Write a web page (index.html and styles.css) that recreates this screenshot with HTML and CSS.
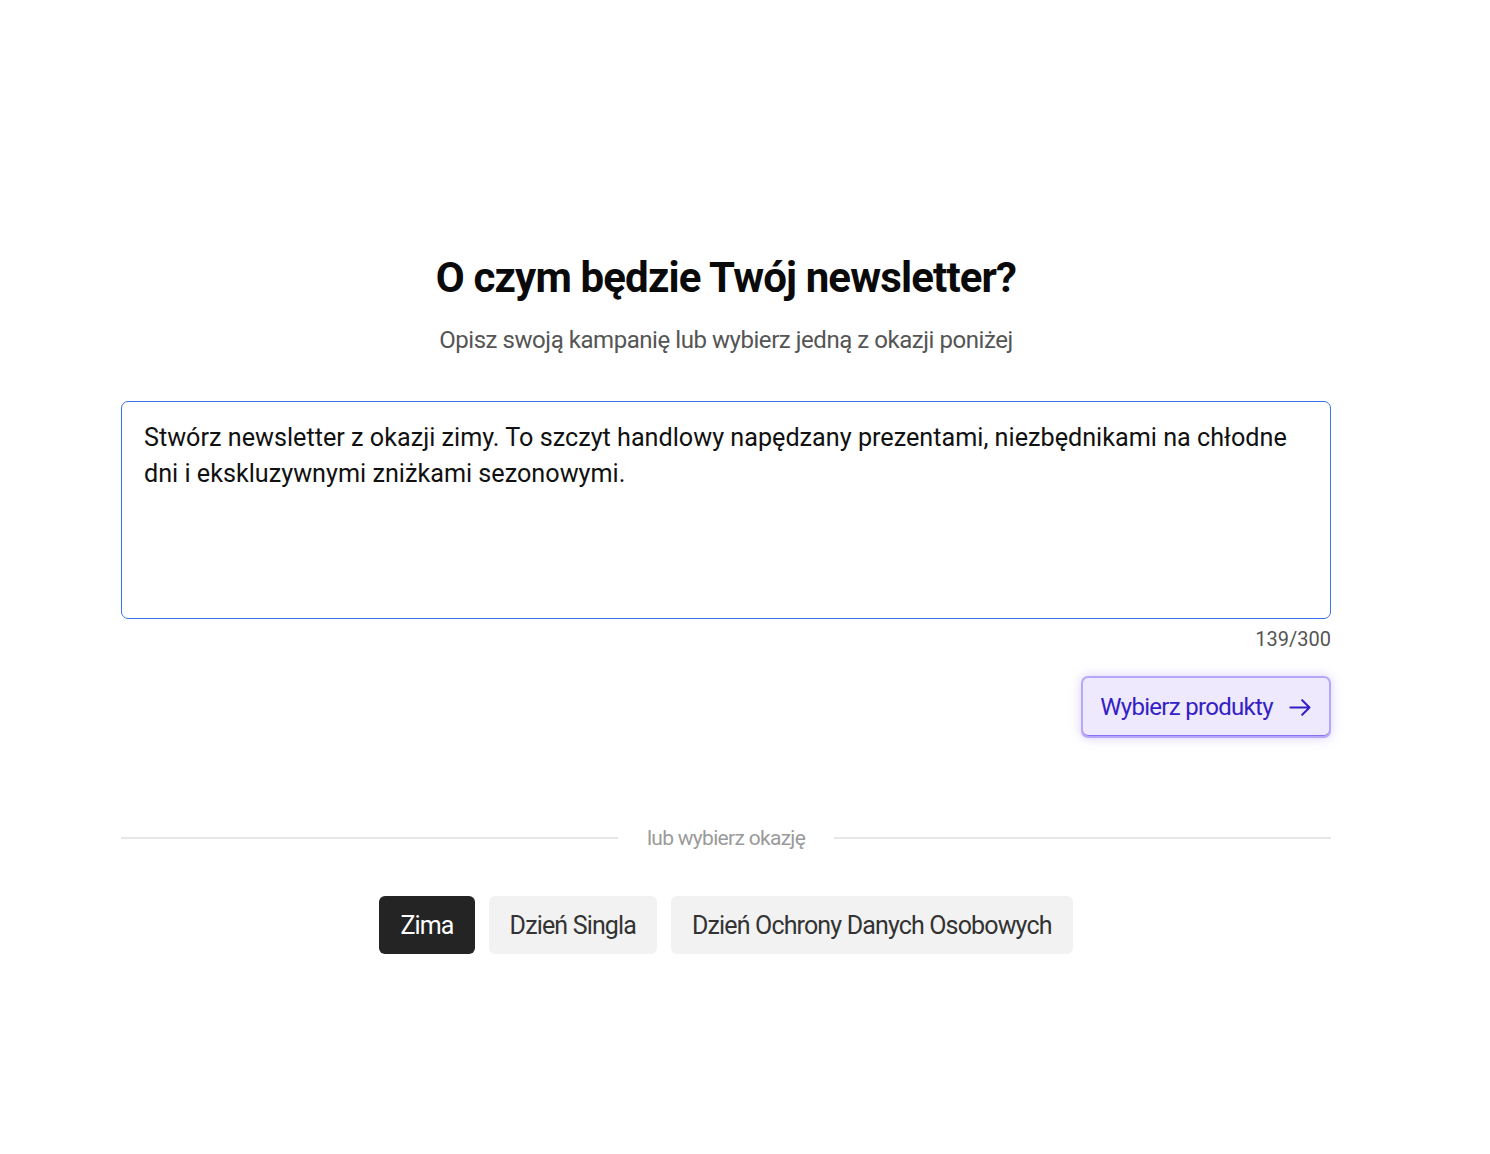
FILE: index.html
```html
<!DOCTYPE html>
<html lang="pl">
<head>
<meta charset="utf-8">
<title>Newsletter</title>
<link rel="stylesheet" href="styles.css">
</head>
<body>
<main class="page">
  <section class="wrap">
    <h1 class="title">O czym będzie Twój newsletter?</h1>
    <p class="subtitle">Opisz swoją kampanię lub wybierz jedną z okazji poniżej</p>
    <textarea class="prompt" maxlength="300">Stwórz newsletter z okazji zimy. To szczyt handlowy napędzany prezentami, niezbędnikami na chłodne dni i ekskluzywnymi zniżkami sezonowymi.</textarea>
    <div class="counter">139/300</div>
    <div class="actions">
      <button class="next" type="button"><span class="next-label">Wybierz produkty</span>
        <svg class="arrow" width="24" height="24" viewBox="0 0 24 24" fill="none" stroke="currentColor" stroke-width="1.8" stroke-linecap="round" stroke-linejoin="round"><path d="M3 12h17M13.5 5.5 20 12l-6.5 6.5"/></svg>
      </button>
    </div>
    <div class="divider"><span class="line"></span><span class="divider-text">lub wybierz okazję</span><span class="line"></span></div>
    <div class="chips">
      <button class="chip chip-active" type="button">Zima</button>
      <button class="chip" type="button">Dzień Singla</button>
      <button class="chip" type="button">Dzień Ochrony Danych Osobowych</button>
    </div>
  </section>
</main>
</body>
</html>
```
FILE: styles.css
```css
html, body {
  margin: 0;
  padding: 0;
  background: #ffffff;
}
body {
  font-family: Roboto, "Liberation Sans", Arial, sans-serif;
  color: #111;
}
.page {
  padding: 253px 38px 0 0;
  display: flex;
  justify-content: center;
}
.wrap {
  width: 1210px;
  display: flex;
  flex-direction: column;
}
.title {
  margin: 0;
  text-align: center;
  font-size: 42px;
  font-weight: 700;
  letter-spacing: -0.85px;
  line-height: 50px;
  color: #0a0a0a;
}
.subtitle {
  margin: 21px 0 0;
  text-align: center;
  font-size: 24px;
  letter-spacing: -0.45px;
  line-height: 32px;
  color: #555;
}
.prompt {
  margin-top: 45px;
  box-sizing: border-box;
  width: 1210px;
  height: 218px;
  border: 1px solid #3a74ec;
  border-radius: 7px;
  padding: 18px 22px;
  font-family: Roboto, "Liberation Sans", Arial, sans-serif;
  font-size: 25.2px;
  line-height: 36px;
  color: #111;
  resize: none;
  outline: none;
}
.counter {
  margin-top: 6px;
  text-align: right;
  font-size: 20px;
  line-height: 28px;
  color: #555;
}
.actions {
  margin-top: 23px;
  display: flex;
  justify-content: flex-end;
}
.next {
  height: 62px;
  width: 250px;
  box-sizing: border-box;
  display: flex;
  align-items: center;
  justify-content: center;
  gap: 14px;
  padding: 0 16px 0 18px;
  border: 2px solid #b7a7f7;
  border-radius: 7px;
  background: #eee9fd;
  color: #3421c4;
  font-family: Roboto, "Liberation Sans", Arial, sans-serif;
  font-size: 24px;
  letter-spacing: -0.7px;
  white-space: nowrap;
  box-shadow: 0 0 12px rgba(150, 120, 250, 0.35), inset 0 -1px 0 #8a6ff0;
  cursor: pointer;
}
.next-label {
  white-space: nowrap;
}
.arrow {
  width: 27px;
  height: 27px;
  flex: none;
}
.divider {
  margin-top: 86px;
  display: flex;
  align-items: center;
  gap: 29px;
}
.line {
  flex: 1;
  height: 2px;
  background: #e6e6e6;
}
.divider-text {
  font-size: 21px;
  letter-spacing: -0.7px;
  color: #9a9a9a;
  line-height: 28px;
}
.chips {
  margin-top: 44px;
  display: flex;
  justify-content: center;
  gap: 14px;
}
.chip {
  height: 58px;
  padding: 0 21px;
  border: none;
  border-radius: 6px;
  background: #f2f2f2;
  color: #333;
  font-family: Roboto, "Liberation Sans", Arial, sans-serif;
  font-size: 25px;
  letter-spacing: -0.85px;
  cursor: pointer;
}
.chip-active {
  background: #242424;
  color: #fff;
}
```
